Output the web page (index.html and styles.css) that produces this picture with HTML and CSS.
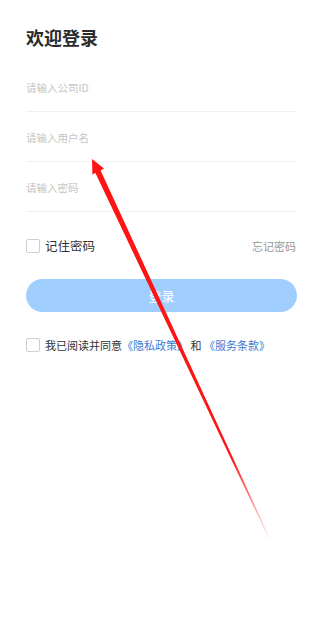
FILE: index.html
```html
<!DOCTYPE html>
<html lang="zh-CN">
<head>
<meta charset="utf-8">
<title>欢迎登录</title>
<link rel="stylesheet" href="styles.css">
</head>
<body>
<div class="page">
  <h1 class="title">欢迎登录</h1>
  <div class="field"><input class="input" type="text" placeholder="请输入公司ID"></div>
  <div class="field"><input class="input" type="text" placeholder="请输入用户名"></div>
  <div class="field"><input class="input" type="password" placeholder="请输入密码"></div>
  <div class="remember-row">
    <label class="check-label"><span class="checkbox"></span><span class="remember-text">记住密码</span></label>
    <span class="forgot">忘记密码</span>
  </div>
  <button class="login-btn" type="button">登录</button>
  <div class="agree-row">
    <span class="checkbox"></span>
    <span class="agree-text">我已阅读并同意<span class="link">《隐私政策》</span> 和 <span class="link">《服务条款》</span></span>
  </div>
</div>
<svg class="annotation" width="315" height="634" viewBox="0 0 315 634" xmlns="http://www.w3.org/2000/svg">
  <defs>
    <linearGradient id="fade" gradientUnits="userSpaceOnUse" x1="92" y1="159" x2="271" y2="542">
      <stop offset="0" stop-color="#ff1414" stop-opacity="1"/>
      <stop offset="0.78" stop-color="#ff1414" stop-opacity="1"/>
      <stop offset="1" stop-color="#ff1414" stop-opacity="0"/>
    </linearGradient>
  </defs>
  <polygon points="92,159 104,168.5 100.6,170.4 271.6,542 270.6,542.4 95.4,172.9 92.4,174.6" fill="url(#fade)"/>
</svg>
</body>
</html>
```
FILE: styles.css
```css
html, body {
  margin: 0;
  padding: 0;
  background: #ffffff;
}
body {
  width: 315px;
  height: 634px;
  position: relative;
  overflow: hidden;
  font-family: "Noto Sans CJK SC", "Noto Sans", "Liberation Sans", sans-serif;
}
.page {
  padding: 24px 18px 0 26px;
  display: flex;
  flex-direction: column;
}
.title {
  margin: 0 0 12px 0;
  font-size: 18px;
  line-height: 26px;
  font-weight: 700;
  color: #2b2b2b;
}
.field {
  height: 49px;
  border-bottom: 1px solid #f0f0f0;
  padding-top: 18px;
  box-sizing: border-box;
  height: 50px;
}
.input {
  display: block;
  width: 100%;
  border: none;
  outline: none;
  padding: 0;
  margin: 0;
  background: transparent;
  font-family: inherit;
  font-size: 10.5px;
  line-height: 16px;
  height: 16px;
  color: #333;
}
.input::placeholder {
  color: #c4c4c4;
}
.remember-row {
  margin-top: 27px;
  display: flex;
  align-items: center;
  justify-content: space-between;
  height: 14px;
}
.check-label {
  display: flex;
  align-items: center;
}
.checkbox {
  width: 14px;
  height: 14px;
  box-sizing: border-box;
  border: 1px solid #cfcfcf;
  border-radius: 2px;
  background: #fff;
  flex: none;
}
.remember-text {
  margin-left: 5px;
  font-size: 12.5px;
  line-height: 14px;
  color: #333;
}
.forgot {
  font-size: 11px;
  line-height: 14px;
  color: #999;
  margin-right: 1px;
}
.login-btn {
  margin-top: 26px;
  height: 33px;
  border: none;
  border-radius: 17px;
  background: #a0cfff;
  color: #ffffff;
  font-family: inherit;
  font-size: 13px;
  padding: 0;
}
.agree-row {
  margin-top: 26px;
  display: flex;
  align-items: center;
  height: 14px;
}
.agree-text {
  margin-left: 5px;
  font-size: 11px;
  line-height: 14px;
  color: #333;
  white-space: nowrap;
}
.link {
  color: #3a7bd5;
}
.annotation {
  position: absolute;
  left: 0;
  top: 0;
  pointer-events: none;
}
```
